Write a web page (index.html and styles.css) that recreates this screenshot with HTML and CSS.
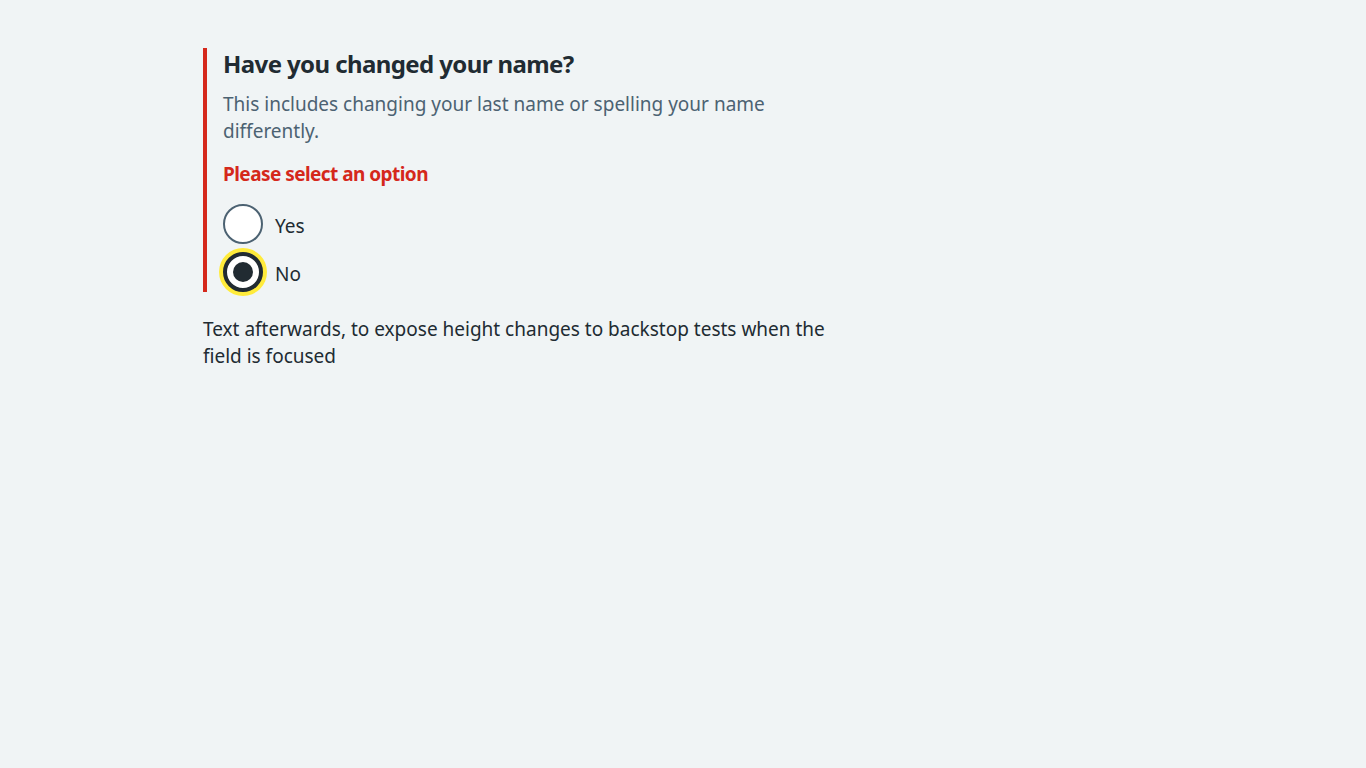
FILE: index.html
```html
<!DOCTYPE html>
<html lang="en">
<head>
<meta charset="utf-8">
<title>Radios error</title>
<link rel="stylesheet" href="styles.css">
</head>
<body>
<div class="container">
  <div class="column">
    <div class="form-group form-group--error">
      <fieldset class="fieldset">
        <legend class="legend">Have you changed your name?</legend>
        <div class="hint">This includes changing your last name or spelling your name differently.</div>
        <span class="error-message">Please select an option</span>
        <div class="radios">
          <div class="radio-item">
            <input class="radio-input" id="r1" name="name" type="radio" value="yes">
            <label class="radio-label" for="r1">Yes</label>
          </div>
          <div class="radio-item">
            <input class="radio-input radio-input--focus" id="r2" name="name" type="radio" value="no" checked>
            <label class="radio-label" for="r2">No</label>
          </div>
        </div>
      </fieldset>
    </div>
    <p class="body-text">Text afterwards, to expose height changes to backstop tests when the field is focused</p>
  </div>
</div>
</body>
</html>
```

FILE: styles.css
```css
html, body {
  margin: 0;
  padding: 0;
  background: #f0f4f5;
}
body {
  font-family: "Noto Sans", "Liberation Sans", sans-serif;
  color: #212b32;
  -webkit-font-smoothing: antialiased;
}
.container {
  max-width: 960px;
  margin: 0 auto;
  padding-top: 48px;
}
.column {
  width: 640px;
}
.form-group {
  margin-bottom: 24px;
}
.form-group--error {
  border-left: 4px solid #d5281b;
  padding-left: 16px;
}
.fieldset {
  border: 0;
  margin: 0;
  padding: 0;
  min-width: 0;
}
.legend {
  padding: 0;
  font-size: 24px;
  font-weight: 700;
  letter-spacing: -0.6px;
  line-height: 32px;
  margin-bottom: 11px;
  color: #212b32;
}
.hint {
  font-size: 19px;
  line-height: 27px;
  color: #4c6272;
  margin-bottom: 16px;
}
.error-message {
  display: block;
  font-size: 19px;
  line-height: 27px;
  font-weight: 700;
  letter-spacing: -0.55px;
  color: #d5281b;
  margin-bottom: 16px;
}
.radios {
  display: flex;
  flex-direction: column;
  gap: 8px;
}
.radio-item {
  display: flex;
  align-items: center;
  position: relative;
  min-height: 40px;
}
.radio-input {
  appearance: none;
  -webkit-appearance: none;
  margin: 0;
  width: 40px;
  height: 40px;
  box-sizing: border-box;
  border: 2px solid #4c6272;
  border-radius: 50%;
  background: #ffffff;
  flex: none;
  position: relative;
}
.radio-input:checked {
  border: 4px solid #212b32;
}
.radio-input:checked::after {
  content: "";
  position: absolute;
  left: 6px;
  top: 6px;
  width: 20px;
  height: 20px;
  border-radius: 50%;
  background: #212b32;
}
.radio-input--focus {
  box-shadow: 0 0 0 4px #ffeb3b;
}
.radio-label {
  font-size: 19px;
  line-height: 27px;
  padding: 4px 12px 0;
  color: #212b32;
}
.body-text {
  margin: 0;
  font-size: 19px;
  line-height: 27px;
  color: #212b32;
}
```
